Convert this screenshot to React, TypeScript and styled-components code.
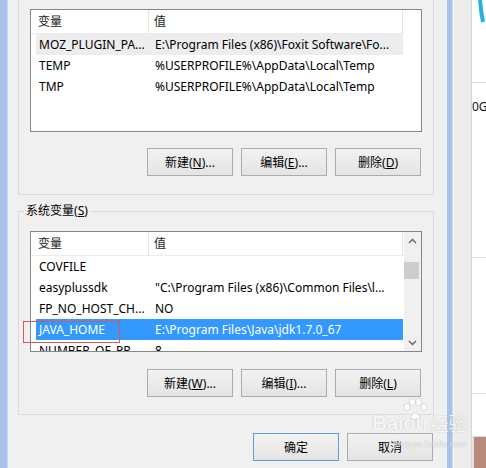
import React from "react";
import styled, { createGlobalStyle } from "styled-components";

const GlobalStyle = createGlobalStyle`
  html, body { margin: 0; padding: 0; background: #f0f0f0; }
  body {
    width: 486px; height: 468px; overflow: hidden;
    font-family: "Noto Sans", "Noto Sans CJK SC", sans-serif;
    font-size: 12px; color: #000;
  }
`;

const UI_FONT = `"Noto Sans", "Noto Sans CJK SC", sans-serif`;

const Screen = styled.div`
  position: relative;
  display: flex;
  width: 486px;
  height: 468px;
  overflow: hidden;
  font-family: ${UI_FONT};
`;

const FrameStrip = styled.div<{ $w: number }>`
  flex: 0 0 ${(p) => p.$w}px;
  background: #a8c3e7;
  box-shadow: inset -1px 0 0 rgba(255, 255, 255, 0.35);
`;

const Dialog = styled.div`
  flex: 0 0 439px;
  box-sizing: border-box;
  display: flex;
  flex-direction: column;
  padding: 0 13px 0 10px;
  background: #f0f0f0;
`;

const UpperGroup = styled.div`
  display: flex;
  flex-direction: column;
  border: 1px solid #dcdcdc;
  border-top: none;
  padding: 9px 11px 18px;
`;

const LowerGroup = styled.fieldset`
  margin: 8px 0 0;
  min-inline-size: 0;
  border: 1px solid #dcdcdc;
  padding: 0 11px 17px;
  display: flex;
  flex-direction: column;
`;

const GroupTitle = styled.legend`
  margin-left: -6px;
  padding: 0 2px;
  font-size: 12px;
  line-height: 16px;
  color: #000;
`;

const ListWrap = styled.div<{ $mt: number }>`
  position: relative;
  margin-top: ${(p) => p.$mt}px;
`;

const ListBox = styled.div<{ $h: number }>`
  height: ${(p) => p.$h}px;
  box-sizing: border-box;
  border: 1px solid #828790;
  background: #fff;
  display: flex;
  overflow: hidden;
`;

const ListMain = styled.div`
  flex: 0 0 373px;
  display: flex;
  flex-direction: column;
  min-width: 0;
`;

const Header = styled.div`
  flex: 0 0 24px;
  box-sizing: border-box;
  display: flex;
  border-bottom: 1px solid #ececec;
`;

const HeaderCell = styled.div<{ $w: number; $pad: number }>`
  flex: 0 0 ${(p) => p.$w}px;
  box-sizing: border-box;
  border-right: 1px solid #e5e5e5;
  padding-left: ${(p) => p.$pad}px;
  line-height: 23px;
  font-size: 12px;
  color: #1a1a1a;
`;

const Rows = styled.div`
  padding-left: 5px;
`;

type RowState = "none" | "hover" | "selected";

const Row = styled.div<{ $state: RowState }>`
  display: grid;
  grid-template-columns: 113px 1fr;
  width: 367px;
  height: 21px;
  line-height: 21px;
  background: ${(p) =>
    p.$state === "selected" ? "#3399ff" : p.$state === "hover" ? "#ededed" : "transparent"};
  color: ${(p) => (p.$state === "selected" ? "#fff" : "#000")};
`;

const Cell = styled.div<{ $pad: number }>`
  padding-left: ${(p) => p.$pad}px;
  white-space: nowrap;
  overflow: hidden;
  font-size: 12px;
`;

const BlankGutter = styled.div`
  flex: 0 0 17px;
`;

const Scrollbar = styled.div`
  flex: 0 0 17px;
  display: flex;
  flex-direction: column;
  background: #f0f0f0;
`;

const ScrollButton = styled.div`
  flex: 0 0 17px;
  display: flex;
  align-items: center;
  justify-content: center;
`;

const ScrollTrack = styled.div`
  flex: 1;
  padding-top: 13px;
`;

const Thumb = styled.div`
  width: 15px;
  height: 17px;
  background: #cdcdcd;
`;

const ButtonRow = styled.div<{ $mt: number }>`
  display: flex;
  justify-content: flex-end;
  gap: 8px;
  margin-top: ${(p) => p.$mt}px;
  padding-right: 1px;
`;

const WinButton = styled.div<{ $default?: boolean }>`
  width: 86px;
  height: 28px;
  box-sizing: border-box;
  border: 1px solid ${(p) => (p.$default ? "#5c9fdc" : "#acacac")};
  background: linear-gradient(#f2f2f2, #e4e4e4);
  display: flex;
  align-items: center;
  justify-content: center;
  font-size: 12px;
  color: #000;
  white-space: nowrap;
`;

const RedMark = styled.div`
  position: absolute;
  left: -7px;
  top: 90px;
  width: 97px;
  height: 22px;
  box-sizing: border-box;
  border: 1px solid #d8585c;
  pointer-events: none;
`;

const RightArea = styled.div`
  flex: 1;
  display: flex;
`;

const GrayColumn = styled.div`
  flex: 0 0 17px;
  background: #ececec;
  border-left: 1px solid #f6f6f6;
`;

const WhitePanel = styled.div`
  flex: 1;
  display: flex;
  flex-direction: column;
  background: #fff;
  border-left: 1px solid #d6d6d6;
`;

const PanelSection = styled.div<{ $h: number }>`
  flex: 0 0 ${(p) => p.$h}px;
  box-sizing: border-box;
  border-bottom: 1px solid #dedede;
  overflow: hidden;
`;

const PanelText = styled.div`
  padding-top: 16px;
  font-size: 12px;
  line-height: 16px;
  color: #111;
  white-space: nowrap;
`;

const BrownBlock = styled.div`
  flex: 1;
  background: #b88a7c;
  border-left: 2px solid #e8e0dd;
`;

const Watermark = styled.div`
  position: absolute;
  left: 372px;
  top: 398px;
  width: 100px;
  height: 64px;
  pointer-events: none;
  color: rgba(255, 255, 255, 0.9);
  text-shadow: 0 0 1px rgba(120, 120, 120, 0.6);
  font-family: "Liberation Sans", sans-serif;
`;

const WmLogo = styled.div`
  display: flex;
  align-items: flex-end;
  font-size: 21px;
  font-weight: bold;
  line-height: 22px;
  margin-top: 14px;
  letter-spacing: -0.5px;
`;

const WmCjk = styled.span`
  font-family: "Noto Sans CJK SC", sans-serif;
  font-size: 19px;
  font-weight: normal;
  margin-left: 2px;
`;

const WmSub = styled.div`
  font-size: 9px;
  line-height: 10px;
  margin-left: 22px;
  margin-top: 5px;
  color: rgba(255, 255, 255, 0.8);
`;

const PawSvg = styled.svg`
  position: absolute;
  left: 28px;
  top: 0;
`;

const Chevron = ({ up }: { up?: boolean }) => (
  <svg width="9" height="6" viewBox="0 0 9 6">
    <polyline
      points={up ? "1,5 4.5,1.5 8,5" : "1,1 4.5,4.5 8,1"}
      fill="none"
      stroke="#606060"
      strokeWidth="1.3"
    />
  </svg>
);

type Item = { name: string; value: string; state?: RowState };

const userVars: Item[] = [
  { name: "MOZ_PLUGIN_PA...", value: "E:\\Program Files (x86)\\Foxit Software\\Fo...", state: "hover" },
  { name: "TEMP", value: "%USERPROFILE%\\AppData\\Local\\Temp" },
  { name: "TMP", value: "%USERPROFILE%\\AppData\\Local\\Temp" },
];

const sysVars: Item[] = [
  { name: "COVFILE", value: "" },
  { name: "easyplussdk", value: "\"C:\\Program Files (x86)\\Common Files\\l..." },
  { name: "FP_NO_HOST_CH...", value: "NO" },
  { name: "JAVA_HOME", value: "E:\\Program Files\\Java\\jdk1.7.0_67", state: "selected" },
  { name: "NUMBER_OF_PR...", value: "8" },
];

const VarList = ({ items, h, scroll }: { items: Item[]; h: number; scroll?: boolean }) => (
  <ListBox $h={h}>
    <ListMain>
      <Header>
        <HeaderCell $w={118} $pad={7}>变量</HeaderCell>
        <HeaderCell $w={254} $pad={5}>值</HeaderCell>
      </Header>
      <Rows>
        {items.map((it) => (
          <Row key={it.name} $state={it.state ?? "none"}>
            <Cell $pad={3}>{it.name}</Cell>
            <Cell $pad={6}>{it.value}</Cell>
          </Row>
        ))}
      </Rows>
    </ListMain>
    {scroll ? (
      <Scrollbar>
        <ScrollButton>
          <Chevron up />
        </ScrollButton>
        <ScrollTrack>
          <Thumb />
        </ScrollTrack>
        <ScrollButton>
          <Chevron />
        </ScrollButton>
      </Scrollbar>
    ) : (
      <BlankGutter />
    )}
  </ListBox>
);

const Label = ({ text, key1, tail }: { text: string; key1: string; tail?: string }) => (
  <span>
    {text}(<u>{key1}</u>){tail}
  </span>
);

export default function App() {
  return (
    <>
      <GlobalStyle />
      <Screen>
        <FrameStrip $w={8} />
        <Dialog>
          <UpperGroup>
            <ListWrap $mt={0}>
              <VarList items={userVars} h={123} />
            </ListWrap>
            <ButtonRow $mt={16}>
              <WinButton><Label text="新建" key1="N" tail="..." /></WinButton>
              <WinButton><Label text="编辑" key1="E" tail="..." /></WinButton>
              <WinButton><Label text="删除" key1="D" /></WinButton>
            </ButtonRow>
          </UpperGroup>
          <LowerGroup>
            <GroupTitle>
              <Label text="系统变量" key1="S" />
            </GroupTitle>
            <ListWrap $mt={12}>
              <VarList items={sysVars} h={121} scroll />
              <RedMark />
            </ListWrap>
            <ButtonRow $mt={17}>
              <WinButton><Label text="新建" key1="W" tail="..." /></WinButton>
              <WinButton><Label text="编辑" key1="I" tail="..." /></WinButton>
              <WinButton><Label text="删除" key1="L" /></WinButton>
            </ButtonRow>
          </LowerGroup>
          <ButtonRow $mt={18}>
            <WinButton $default>确定</WinButton>
            <WinButton>取消</WinButton>
          </ButtonRow>
        </Dialog>
        <FrameStrip $w={6} />
        <RightArea>
          <GrayColumn />
          <WhitePanel>
            <PanelSection $h={83}>
              <svg width="15" height="24" viewBox="0 0 15 24">
                <path d="M8 0 Q9 12 11 22" fill="none" stroke="#27b3d6" strokeWidth="4" />
              </svg>
            </PanelSection>
            <PanelSection $h={175}>
              <PanelText>0G</PanelText>
            </PanelSection>
            <PanelSection $h={136} />
            <PanelSection $h={43} />
            <BrownBlock />
          </WhitePanel>
        </RightArea>
        <Watermark>
          <PawSvg width="30" height="22" viewBox="0 0 30 22">
            <g fill="rgba(255,255,255,0.85)" stroke="rgba(150,150,150,0.5)" strokeWidth="0.6">
              <ellipse cx="7" cy="9" rx="3" ry="3.6" />
              <ellipse cx="12.5" cy="4" rx="3" ry="3.6" />
              <ellipse cx="18.5" cy="4" rx="3" ry="3.6" />
              <ellipse cx="24" cy="9" rx="3" ry="3.6" />
              <path d="M10 20 Q15 9 21 20 Q15 23 10 20 Z" />
            </g>
          </PawSvg>
          <WmLogo>
            Baidu<WmCjk>经验</WmCjk>
          </WmLogo>
          <WmSub>jingyan.baidu.com</WmSub>
        </Watermark>
      </Screen>
    </>
  );
}
